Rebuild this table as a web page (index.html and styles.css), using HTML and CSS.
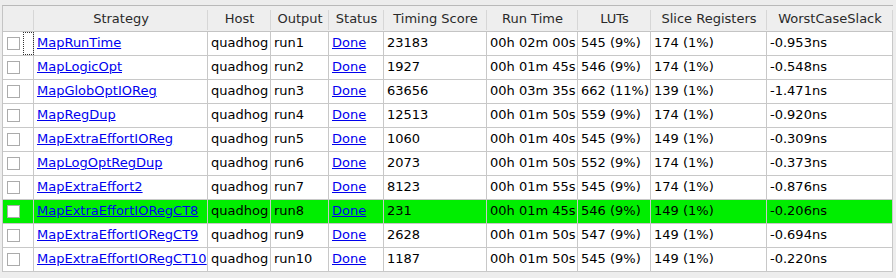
FILE: index.html
```html
<!DOCTYPE html>
<html>
<head>
<meta charset="utf-8">
<link rel="stylesheet" href="styles.css">
</head>
<body>
<table class="grid">
  <colgroup>
    <col class="c-check"><col class="c-strategy"><col class="c-host"><col class="c-output"><col class="c-status"><col class="c-score"><col class="c-time"><col class="c-luts"><col class="c-slice"><col class="c-slack">
  </colgroup>
  <thead>
    <tr>
      <th></th><th>Strategy</th><th>Host</th><th>Output</th><th>Status</th><th>Timing Score</th><th>Run Time</th><th>LUTs</th><th>Slice Registers</th><th>WorstCaseSlack</th>
    </tr>
  </thead>
  <tbody>
    <tr><td class="check"><span class="box"></span><span class="focus"></span></td><td><a href="#">MapRunTime</a></td><td>quadhog</td><td>run1</td><td><a href="#">Done</a></td><td>23183</td><td>00h 02m 00s</td><td>545 (9%)</td><td>174 (1%)</td><td>-0.953ns</td></tr>
    <tr><td class="check"><span class="box"></span></td><td><a href="#">MapLogicOpt</a></td><td>quadhog</td><td>run2</td><td><a href="#">Done</a></td><td>1927</td><td>00h 01m 45s</td><td>546 (9%)</td><td>174 (1%)</td><td>-0.548ns</td></tr>
    <tr><td class="check"><span class="box"></span></td><td><a href="#">MapGlobOptIOReg</a></td><td>quadhog</td><td>run3</td><td><a href="#">Done</a></td><td>63656</td><td>00h 03m 35s</td><td>662 (11%)</td><td>139 (1%)</td><td>-1.471ns</td></tr>
    <tr><td class="check"><span class="box"></span></td><td><a href="#">MapRegDup</a></td><td>quadhog</td><td>run4</td><td><a href="#">Done</a></td><td>12513</td><td>00h 01m 50s</td><td>559 (9%)</td><td>174 (1%)</td><td>-0.920ns</td></tr>
    <tr><td class="check"><span class="box"></span></td><td><a href="#">MapExtraEffortIOReg</a></td><td>quadhog</td><td>run5</td><td><a href="#">Done</a></td><td>1060</td><td>00h 01m 40s</td><td>545 (9%)</td><td>149 (1%)</td><td>-0.309ns</td></tr>
    <tr><td class="check"><span class="box"></span></td><td><a href="#">MapLogOptRegDup</a></td><td>quadhog</td><td>run6</td><td><a href="#">Done</a></td><td>2073</td><td>00h 01m 50s</td><td>552 (9%)</td><td>174 (1%)</td><td>-0.373ns</td></tr>
    <tr><td class="check"><span class="box"></span></td><td><a href="#">MapExtraEffort2</a></td><td>quadhog</td><td>run7</td><td><a href="#">Done</a></td><td>8123</td><td>00h 01m 55s</td><td>545 (9%)</td><td>174 (1%)</td><td>-0.876ns</td></tr>
    <tr class="best"><td class="check"><span class="box"></span></td><td><a href="#">MapExtraEffortIORegCT8</a></td><td>quadhog</td><td>run8</td><td><a href="#">Done</a></td><td>231</td><td>00h 01m 45s</td><td>546 (9%)</td><td>149 (1%)</td><td>-0.206ns</td></tr>
    <tr><td class="check"><span class="box"></span></td><td><a href="#">MapExtraEffortIORegCT9</a></td><td>quadhog</td><td>run9</td><td><a href="#">Done</a></td><td>2628</td><td>00h 01m 50s</td><td>547 (9%)</td><td>149 (1%)</td><td>-0.694ns</td></tr>
    <tr><td class="check"><span class="box"></span></td><td><a href="#">MapExtraEffortIORegCT10</a></td><td>quadhog</td><td>run10</td><td><a href="#">Done</a></td><td>1187</td><td>00h 01m 50s</td><td>545 (9%)</td><td>149 (1%)</td><td>-0.220ns</td></tr>
  </tbody>
</table>
</body>
</html>
```

FILE: styles.css
```css
html, body {
  margin: 0;
  padding: 0;
  background: #ededed;
}

.grid {
  margin: 5px 0 0 2px;
  width: 891px;
  table-layout: fixed;
  border-collapse: separate;
  border-spacing: 0;
  border-top: 1px solid #b9b9b9;
  border-left: 1px solid #c4c4c4;
  font-family: "DejaVu Sans", sans-serif;
  font-size: 13px;
  color: #000;
}

.c-check { width: 31px; }
.c-strategy { width: 174px; }
.c-host { width: 63px; }
.c-output { width: 58px; }
.c-status { width: 55px; }
.c-score { width: 103px; }
.c-time { width: 91px; }
.c-luts { width: 73px; }
.c-slice { width: 116px; }
.c-slack { width: 126px; }

.grid th {
  position: relative;
  box-sizing: border-box;
  background: #eeeeee;
  font-weight: normal;
  color: #2a2a2a;
  line-height: 25px;
  height: 26px;
  padding: 0;
  text-align: center;
  white-space: nowrap;
  border-bottom: 1px solid #c4c4c4;
}

.grid th::after {
  content: "";
  position: absolute;
  right: 0;
  top: 4px;
  bottom: 1px;
  width: 1px;
  background: #d6d6d6;
}

.grid td {
  position: relative;
  box-sizing: border-box;
  background: #ffffff;
  line-height: 22px;
  height: 24px;
  padding: 0 0 1px 3px;
  white-space: nowrap;
  overflow: hidden;
  border-right: 1px solid #c8c8c8;
  border-bottom: 1px solid #c8c8c8;
}

.grid tr.best td {
  background: #00ee00;
}

.grid a {
  color: #0000ee;
  text-decoration: underline;
}

.grid td.check {
  padding: 0 0 0 4px;
  overflow: visible;
}

.box {
  display: inline-block;
  vertical-align: middle;
  width: 11px;
  height: 11px;
  margin-top: -2px;
  background: #ffffff;
  border: 1px solid #ababab;
}

.focus {
  position: absolute;
  top: 0;
  right: -1px;
  width: 9px;
  height: 21px;
  border: 1px dotted #333333;
}
```
